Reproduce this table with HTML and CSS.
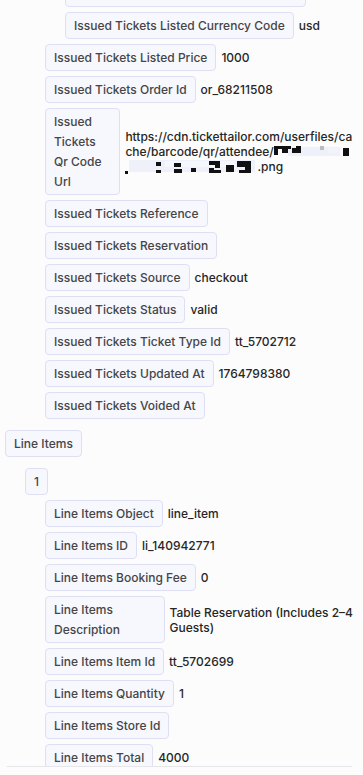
FILE: index.html
```html
<!DOCTYPE html>
<html lang="en">
<head>
<meta charset="utf-8">
<title>Order details</title>
<link rel="stylesheet" href="styles.css">
</head>
<body>
<div class="viewport">
  <div class="tree">
    <div class="node">
      <div class="kids kids-root">
        <div class="node">
          <div class="kids">
            <div class="node">
              <div class="kids kids-first">
                <div class="row"><span class="key">Issued Tickets Listed Currency Symbol</span></div>
                <div class="row"><span class="key">Issued Tickets Listed Currency Code</span><span class="val">usd</span></div>
              </div>
            </div>
            <div class="row"><span class="key">Issued Tickets Listed Price</span><span class="val">1000</span></div>
            <div class="row"><span class="key">Issued Tickets Order Id</span><span class="val">or_68211508</span></div>
            <div class="row"><span class="key">Issued Tickets Qr Code Url</span><span class="val val-url">https://cdn.tickettailor.com/userfiles/cache/barcode/qr/attendee/<svg class="redact r1" width="76" height="15" viewBox="0 0 76 15"><rect x="14" y="3" width="52" height="9" fill="#eef0fa"/><rect x="0" y="2" width="17" height="3" fill="#111"/><rect x="0" y="2" width="4" height="9" fill="#111"/><rect x="8" y="5" width="6" height="4" fill="#111"/><rect x="18" y="4" width="9" height="5" fill="#111"/><rect x="22" y="2" width="5" height="3" fill="#111"/><rect x="46" y="2" width="4" height="4" fill="#bbb"/><rect x="69" y="4" width="6" height="8" fill="#111"/><rect x="54" y="4" width="10" height="5" fill="#f3f4fb"/></svg><svg class="redact r2" width="132" height="15" viewBox="0 0 132 15"><rect x="4" y="1" width="126" height="12" fill="#eef0fa"/><rect x="40" y="2" width="70" height="6" fill="#f6f7fc"/><rect x="0" y="12" width="3" height="3" fill="#111"/><rect x="31" y="3" width="5" height="4" fill="#111"/><rect x="31" y="11" width="5" height="3" fill="#111"/><rect x="49" y="4" width="7" height="4" fill="#111"/><rect x="49" y="10" width="8" height="4" fill="#111"/><rect x="66" y="9" width="5" height="4" fill="#111"/><rect x="84" y="2" width="11" height="4" fill="#111"/><rect x="90" y="5" width="5" height="4" fill="#111"/><rect x="84" y="9" width="5" height="5" fill="#111"/><rect x="84" y="11" width="12" height="3" fill="#111"/><rect x="101" y="6" width="8" height="7" fill="#111"/><rect x="112" y="2" width="14" height="6" fill="#111"/><rect x="120" y="7" width="6" height="7" fill="#111"/><rect x="114" y="11" width="9" height="3" fill="#111"/></svg>.png</span></div>
            <div class="row"><span class="key">Issued Tickets Reference</span></div>
            <div class="row"><span class="key">Issued Tickets Reservation</span></div>
            <div class="row"><span class="key">Issued Tickets Source</span><span class="val">checkout</span></div>
            <div class="row"><span class="key">Issued Tickets Status</span><span class="val">valid</span></div>
            <div class="row"><span class="key">Issued Tickets Ticket Type Id</span><span class="val">tt_5702712</span></div>
            <div class="row"><span class="key">Issued Tickets Updated At</span><span class="val">1764798380</span></div>
            <div class="row"><span class="key">Issued Tickets Voided At</span></div>
          </div>
        </div>
      </div>
    </div>

    <div class="node">
      <div class="row"><span class="key">Line Items</span></div>
      <div class="kids kids-root">
        <div class="node">
          <div class="row"><span class="key">1</span></div>
          <div class="kids">
            <div class="row"><span class="key">Line Items Object</span><span class="val">line_item</span></div>
            <div class="row"><span class="key">Line Items ID</span><span class="val">li_140942771</span></div>
            <div class="row"><span class="key">Line Items Booking Fee</span><span class="val">0</span></div>
            <div class="row"><span class="key">Line Items Description</span><span class="val val-multi">Table Reservation (Includes 2–4 Guests)</span></div>
            <div class="row"><span class="key">Line Items Item Id</span><span class="val">tt_5702699</span></div>
            <div class="row"><span class="key">Line Items Quantity</span><span class="val">1</span></div>
            <div class="row"><span class="key">Line Items Store Id</span></div>
            <div class="row"><span class="key">Line Items Total</span><span class="val">4000</span></div>
          </div>
        </div>
      </div>
    </div>
  </div>
</div>
<div class="rule"></div>
</body>
</html>
```

FILE: styles.css
```css
html, body {
  margin: 0;
  padding: 0;
  background: #fcfcfc;
}

body {
  font-family: Inter, "Noto Sans", "Liberation Sans", sans-serif;
  font-size: 12px;
  font-weight: 500;
  color: #2b2b2b;
}

.viewport {
  height: 766px;
  overflow: hidden;
  padding: 0 10px 0 5px;
}

.tree {
  display: flex;
  flex-direction: column;
  gap: 11px;
  margin-top: -25px;
}

.node {
  display: flex;
  flex-direction: column;
}

.kids {
  display: flex;
  flex-direction: column;
  gap: 5px;
  padding-left: 20px;
  margin-top: 5px;
}

.kids-root {
  margin-top: 11px;
}

.tree > .node:first-child > .kids-root {
  margin-top: 0;
}

.kids-first {
  margin-top: 0;
}

.row {
  display: flex;
  align-items: center;
  gap: 5px;
}

.key {
  display: block;
  background: #f7f7fe;
  border: 1px solid #dfdff4;
  border-radius: 4px;
  padding: 3px 8px 2px 8px;
  line-height: 20px;
  color: #454545;
}

.val {
  line-height: 15px;
  color: #262626;
}

.val-url {
  word-break: break-all;
}

.redact {
  vertical-align: -3px;
}

.rule {
  height: 1px;
  background: #e6e6ea;
  margin: 0 11px 0 7px;
}
```
